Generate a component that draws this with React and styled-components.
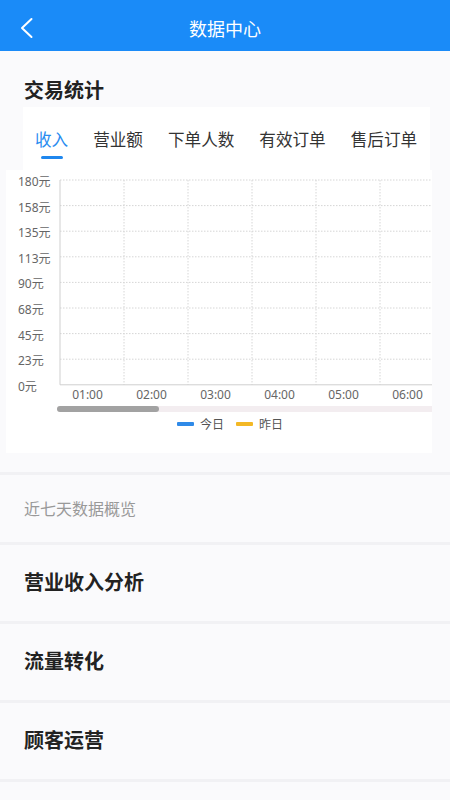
import React from 'react'
import styled, { createGlobalStyle } from 'styled-components'

const tabs = ['收入', '营业额', '下单人数', '有效订单', '售后订单']
const yLabels = ['180元', '158元', '135元', '113元', '90元', '68元', '45元', '23元', '0元']
const xLabels = ['01:00', '02:00', '03:00', '04:00', '05:00', '06:00']
const rows = ['营业收入分析', '流量转化', '顾客运营']

const GlobalStyle = createGlobalStyle`
  html, body {
    margin: 0;
    padding: 0;
    background: #fafafc;
    font-family: "Noto Sans CJK SC", "Noto Sans", sans-serif;
  }
`

function BackIcon() {
  return (
    <svg width="20" height="24" viewBox="0 0 20 24">
      <polyline points="14.5,3 5,12 14.5,21" fill="none" stroke="#fff" strokeWidth="2" strokeLinecap="round" strokeLinejoin="round" />
    </svg>
  )
}

function Chart() {
  const top = 10
  const step = 25.6
  const axisY = top + step * 8
  return (
    <svg width="426" height="235" viewBox="0 0 426 235">
      {yLabels.map((l, i) => (
        <g key={l}>
          {i < 8 && (
            <line x1="54" x2="426" y1={top + step * i} y2={top + step * i} stroke="#d6d6d6" strokeDasharray="1.5 1.5" strokeWidth="1" />
          )}
          <text x="12" y={top + step * i + 6} fontSize="12" fill="#666" fontFamily='"Noto Sans", "Noto Sans CJK SC", sans-serif'>{l}</text>
        </g>
      ))}
      {[118, 182, 246, 310, 374].map(x => (
        <line key={x} x1={x} x2={x} y1={top} y2={axisY} stroke="#d6d6d6" strokeDasharray="1.5 1.5" strokeWidth="1" />
      ))}
      <line x1="54" x2="54" y1={top} y2={axisY} stroke="#cfcfcf" strokeWidth="1" />
      <line x1="54" x2="426" y1={axisY} y2={axisY} stroke="#cfcfcf" strokeWidth="1" />
      {xLabels.map((l, i) => (
        <text key={l} x={81.5 + 64 * i} y="229" fontSize="12" fill="#666" textAnchor="middle" fontFamily='"Noto Sans", sans-serif'>{l}</text>
      ))}
    </svg>
  )
}

export default function App() {
  return (
    <Page>
      <GlobalStyle />
      <Header>
        <Back><BackIcon /></Back>
        <HeaderTitle>数据中心</HeaderTitle>
      </Header>

      <StatsSection>
        <SectionTitle>交易统计</SectionTitle>
        <TabBar>
          {tabs.map((t, i) => (
            <Tab key={t} $active={i === 0}>
              <span>{t}</span>
              <Underline $active={i === 0} />
            </Tab>
          ))}
        </TabBar>
        <ChartCard>
          <Chart />
          <ScrollTrack>
            <ScrollThumb />
          </ScrollTrack>
          <Legend>
            <LegendItem>
              <Swatch $color="#2f8ae8" />
              今日
            </LegendItem>
            <LegendItem>
              <Swatch $color="#f3b825" />
              昨日
            </LegendItem>
          </Legend>
        </ChartCard>
      </StatsSection>

      <OverviewRow>近七天数据概览</OverviewRow>

      {rows.map(r => (
        <ListRow key={r}>{r}</ListRow>
      ))}
    </Page>
  )
}

const Page = styled.div`
  width: 450px;
  min-height: 800px;
  background: #fafafc;
`

const Header = styled.div`
  height: 51px;
  background: #1a8bf8;
  display: flex;
  align-items: center;
  justify-content: center;
  position: relative;
`

const Back = styled.div`
  position: absolute;
  left: 17px;
  top: 16px;
  display: flex;
`

const HeaderTitle = styled.div`
  color: #fff;
  font-size: 18px;
  line-height: 24px;
  margin-top: 4px;
`

const StatsSection = styled.div`
  border-bottom: 3px solid #f1f1f4;
  padding-bottom: 19px;
`

const SectionTitle = styled.div`
  padding: 26px 0 0 24px;
  margin-bottom: 4px;
  font-size: 20px;
  line-height: 26px;
  font-weight: 700;
  color: #222;
`

const TabBar = styled.div`
  margin-left: 23px;
  width: 407px;
  height: 63px;
  box-sizing: border-box;
  padding: 20px 0 0 12px;
  background: #fff;
  display: flex;
  gap: 25px;
`

const Tab = styled.div`
  display: flex;
  flex-direction: column;
  align-items: center;
  font-size: 16.6px;
  line-height: 24px;
  color: ${p => (p.$active ? '#2a8cf0' : '#333')};
  white-space: nowrap;
`

const Underline = styled.div`
  margin-top: 5px;
  width: 22px;
  height: 3px;
  border-radius: 2px;
  background: ${p => (p.$active ? '#1f87ee' : 'transparent')};
`

const ChartCard = styled.div`
  margin-left: 6px;
  width: 426px;
  background: #fff;
  padding-bottom: 20px;
  display: flex;
  flex-direction: column;
`

const ScrollTrack = styled.div`
  margin: 1px 0 0 51px;
  height: 6px;
  background: #f3edf0;
  border-radius: 3px 0 0 3px;
  display: flex;
`

const ScrollThumb = styled.div`
  width: 102px;
  height: 6px;
  border-radius: 3px;
  background: #a2a2a2;
`

const Legend = styled.div`
  margin: 4px 0 1px 171px;
  display: flex;
  gap: 12px;
  height: 16px;
  align-items: center;
`

const LegendItem = styled.div`
  display: flex;
  align-items: center;
  gap: 6px;
  font-size: 12px;
  line-height: 16px;
  color: #555;
`

const Swatch = styled.span`
  width: 17px;
  height: 4px;
  border-radius: 1px;
  background: ${p => p.$color};
`

const OverviewRow = styled.div`
  height: 45px;
  padding: 22px 0 0 24px;
  font-size: 16px;
  line-height: 22px;
  color: #999;
  border-bottom: 3px solid #f1f1f4;
`

const ListRow = styled.div`
  height: 73px;
  padding: 0 0 3px 24px;
  display: flex;
  align-items: center;
  font-size: 20px;
  font-weight: 700;
  color: #222;
  border-bottom: 3px solid #f1f1f4;
`
